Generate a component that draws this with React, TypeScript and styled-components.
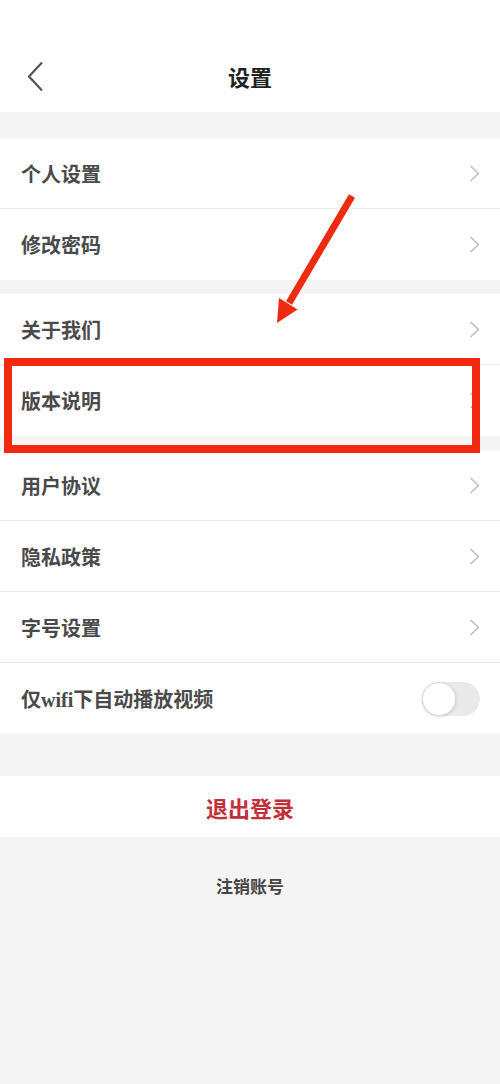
import styled, { createGlobalStyle } from 'styled-components'

const GlobalStyle = createGlobalStyle`
  html, body {
    margin: 0;
    padding: 0;
    background: #f4f4f4;
  }
  body {
    font-family: "Liberation Serif", "Noto Sans CJK SC", serif;
  }
`

const Page = styled.div`
  position: relative;
  min-height: 1084px;
  background: #f4f4f4;
`

const Header = styled.div`
  height: 112px;
  box-sizing: border-box;
  padding-top: 40px;
  background: #fff;
  display: grid;
  grid-template-columns: 60px 1fr 60px;
  grid-template-rows: 72px;
  align-items: center;
`

const BackButton = styled.div`
  padding-left: 27px;
  display: flex;
  align-items: center;
`

const Title = styled.div`
  text-align: center;
  font-size: 22px;
  font-weight: 700;
  color: #222;
  line-height: 1;
  font-family: "Noto Sans CJK SC", sans-serif;
`

const Group = styled.div<{ $gap: number }>`
  margin-top: ${(p) => p.$gap}px;
  background: #fff;
`

const Row = styled.div<{ $last?: boolean }>`
  position: relative;
  height: 71px;
  box-sizing: border-box;
  display: flex;
  align-items: center;
  justify-content: space-between;
  padding: 0 20px 0 21px;
  border-bottom: ${(p) => (p.$last ? 'none' : '1px solid #e9e9e9')};
`

const Label = styled.span`
  font-size: 20px;
  font-weight: 700;
  color: #4a4a4a;
`

const Highlight = styled.div`
  position: absolute;
  top: -7px;
  bottom: -17px;
  left: 4px;
  right: 20px;
  border: 8px solid #f0290f;
  pointer-events: none;
`

const Toggle = styled.div`
  position: relative;
  width: 58px;
  height: 34px;
  border-radius: 17px;
  background: #e9e9e9;
`

const Knob = styled.div`
  position: absolute;
  left: 0;
  top: 0;
  width: 34px;
  height: 34px;
  box-sizing: border-box;
  border-radius: 50%;
  background: #fff;
  border: 1px solid #dcdcdc;
  box-shadow: 0 1px 3px rgba(0, 0, 0, 0.15);
`

const Logout = styled.div`
  margin-top: 42px;
  height: 61px;
  background: #fff;
  display: flex;
  align-items: center;
  justify-content: center;
  font-size: 22px;
  font-weight: 700;
  line-height: 1;
  color: #c3303b;
  font-family: "Noto Sans CJK SC", sans-serif;
`

const Cancel = styled.div`
  margin-top: 40px;
  text-align: center;
  font-size: 17px;
  font-weight: 700;
  line-height: 1;
  color: #454545;
  font-family: "Noto Sans CJK SC", sans-serif;
`

const ArrowSvg = styled.svg`
  position: absolute;
  left: 268px;
  top: 190px;
  pointer-events: none;
`

const Chevron = () => (
  <svg width="11" height="17" viewBox="0 0 11 17">
    <path d="M1.5 1 L9.5 8.5 L1.5 16" fill="none" stroke="#bdbdbd" strokeWidth="1.5" />
  </svg>
)

const SettingRow: React.FC<{ label: string; last?: boolean; highlight?: boolean }> = ({ label, last, highlight }) => (
  <Row $last={last}>
    <Label>{label}</Label>
    <Chevron />
    {highlight && <Highlight />}
  </Row>
)

export default function App() {
  return (
    <Page>
      <GlobalStyle />
      <Header>
        <BackButton>
          <svg width="17" height="31" viewBox="0 0 17 31">
            <path d="M15 1.5 L2 15.5 L15 29.5" fill="none" stroke="#555" strokeWidth="2.2" />
          </svg>
        </BackButton>
        <Title>设置</Title>
        <div />
      </Header>

      <Group $gap={26}>
        <SettingRow label="个人设置" />
        <SettingRow label="修改密码" last />
      </Group>

      <Group $gap={14}>
        <SettingRow label="关于我们" />
        <SettingRow label="版本说明" last highlight />
      </Group>

      <Group $gap={14}>
        <SettingRow label="用户协议" />
        <SettingRow label="隐私政策" />
        <SettingRow label="字号设置" />
        <Row $last>
          <Label>仅wifi下自动播放视频</Label>
          <Toggle>
            <Knob />
          </Toggle>
        </Row>
      </Group>

      <Logout>退出登录</Logout>
      <Cancel>注销账号</Cancel>

      <ArrowSvg width="95" height="140" viewBox="0 0 95 140">
        <line x1="84" y1="6" x2="21" y2="113" stroke="#ee2a10" strokeWidth="7" />
        <polygon points="9,133 29.5,119.5 11,108" fill="#ee2a10" />
      </ArrowSvg>
    </Page>
  )
}
